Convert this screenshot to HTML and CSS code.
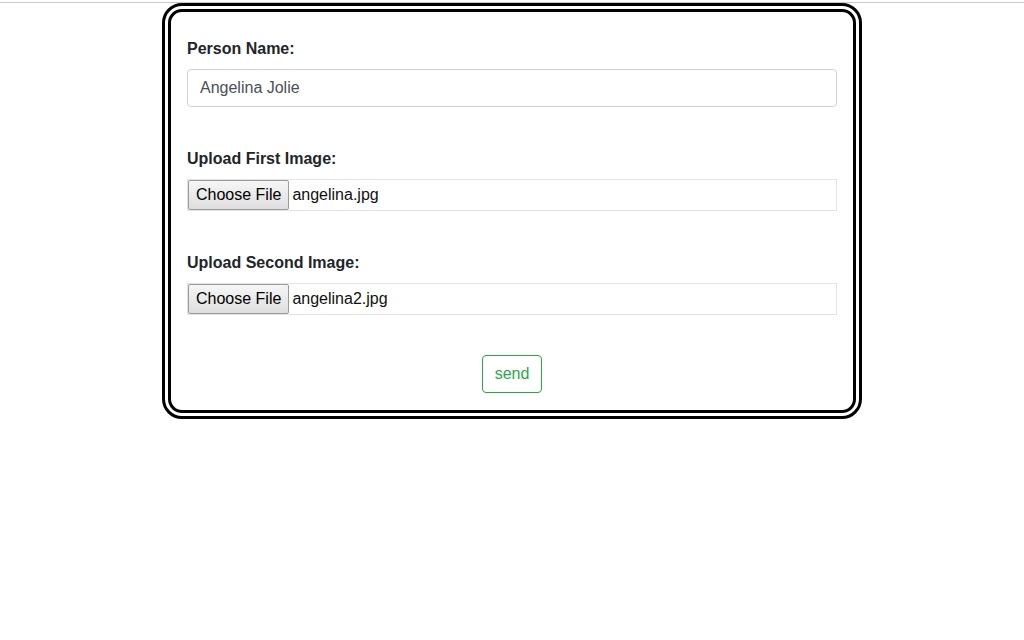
FILE: index.html
```html
<!DOCTYPE html>
<html>
<head>
<meta charset="utf-8">
<link rel="stylesheet" href="styles.css">
</head>
<body>
<div class="topline"></div>
<form class="card">
  <div class="group">
    <label class="lbl">Person Name:</label>
    <input class="text-input" type="text" value="Angelina Jolie">
  </div>
  <div class="group">
    <label class="lbl">Upload First Image:</label>
    <div class="file"><span class="file-btn">Choose File</span><span class="file-name">angelina.jpg</span></div>
  </div>
  <div class="group">
    <label class="lbl">Upload Second Image:</label>
    <div class="file"><span class="file-btn">Choose File</span><span class="file-name">angelina2.jpg</span></div>
  </div>
  <div class="actions">
    <button type="button" class="send">send</button>
  </div>
</form>
</body>
</html>
```

FILE: styles.css
```css
html, body {
  margin: 0;
  padding: 0;
  background: #fff;
  font-family: "Liberation Sans", Arial, sans-serif;
  font-size: 16px;
  color: #212529;
}
.topline {
  margin-top: 2px;
  height: 1px;
  background: #c8c8c8;
}
.card {
  box-sizing: border-box;
  width: 700px;
  margin: 0 auto;
  border: 9px double #000;
  border-radius: 20px;
  padding: 25px 16px 17px;
  display: flex;
  flex-direction: column;
}
.group {
  margin-bottom: 40px;
}
.lbl {
  display: block;
  font-weight: bold;
  line-height: 24px;
  margin-bottom: 8px;
  font-size: 16px;
}
.text-input {
  display: block;
  box-sizing: border-box;
  width: 100%;
  height: 38px;
  margin: 0;
  padding: 6px 12px;
  border: 1px solid #ced4da;
  border-radius: 4px;
  font-family: "Liberation Sans", Arial, sans-serif;
  font-size: 16px;
  line-height: 24px;
  color: #495057;
  background: #fff;
  outline: none;
}
.file {
  box-sizing: border-box;
  height: 32px;
  border: 1px solid #e3e3e3;
  display: flex;
  align-items: center;
}
.file-btn {
  box-sizing: border-box;
  height: 30px;
  padding: 0 7px;
  display: flex;
  align-items: center;
  border: 1px solid #9a9a9a;
  border-radius: 2px;
  background: linear-gradient(#f6f6f6, #dedede);
  color: #000;
  font-size: 16px;
  margin-right: 3px;
}
.file-name {
  color: #111;
  font-size: 16px;
}
.actions {
  display: flex;
  justify-content: center;
}
.send {
  box-sizing: border-box;
  height: 38px;
  padding: 6px 12px;
  border: 1px solid #28a745;
  border-radius: 4px;
  background: #fff;
  color: #28a745;
  font-family: "Liberation Sans", Arial, sans-serif;
  font-size: 16px;
  line-height: 24px;
  cursor: pointer;
}
```
